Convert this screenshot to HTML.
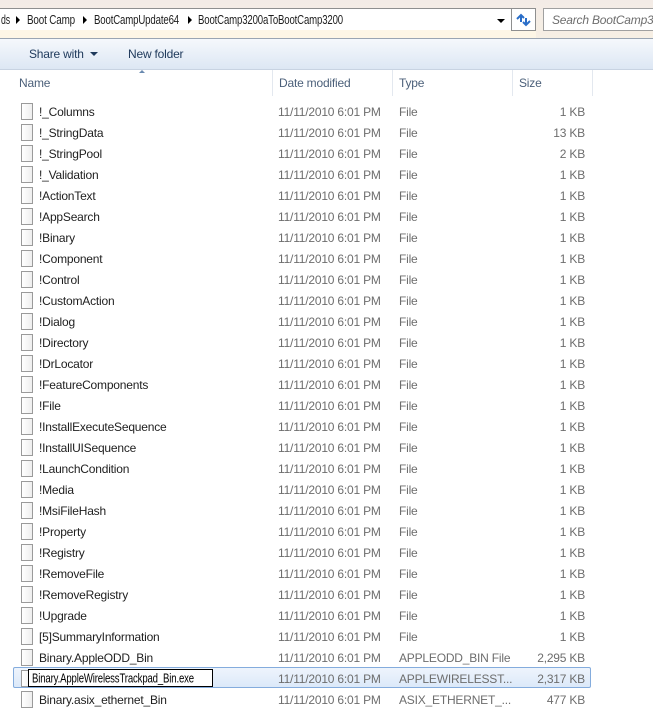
<!DOCTYPE html><html><head><style>
*{margin:0;padding:0;box-sizing:border-box}
body{width:653px;height:711px;overflow:hidden;background:#fff;font-family:"Liberation Sans",sans-serif;font-size:12px;letter-spacing:-0.2px;position:relative}
.top{position:absolute;left:0;top:0;width:653px;height:38px;background:linear-gradient(#f3ebe6,#f6efe4)}
.addr{position:absolute;left:-2px;top:8px;width:538px;height:23px;background:#fff;border:1px solid #8e8f8f;border-bottom:none}
.addrb{position:absolute;left:0;top:30px;width:536px;height:8px;background:#fdf6e6}
.ref{position:absolute;left:511px;top:8px;width:25px;height:23px;border:1px solid #8e8f8f;background:#fff}
.search{position:absolute;left:543px;top:8px;width:120px;height:23px;border:1px solid #a0a0a0;background:#fff;color:#6d6d6d;font-style:italic;padding:4px 8px;white-space:nowrap}
.tb{position:absolute;left:0;top:38px;width:653px;height:32px;background:linear-gradient(#f5f8fc,#dde7f4);border-top:1px solid #9aa5b3;border-bottom:1px solid #c8d3e2}
.tb span{position:absolute;top:8px;color:#1e395b}
.hdr{position:absolute;top:70px;left:0;width:653px;height:26px}
.hdr span{position:absolute;top:6px;color:#4c607a}
.sep{position:absolute;top:70px;width:1px;height:26px;background:#e3e8ef}
.row{position:absolute;left:0;width:653px;height:21px}
.row .ic{position:absolute;left:21px;top:2px;width:12px;height:17px;border:1px solid #9a9a9a;background:linear-gradient(90deg,#fff,#eee)}
.row .n{position:absolute;left:39px;top:4px;color:#1e1e1e;white-space:nowrap}
.row .d{position:absolute;left:278px;top:4px;color:#6d6d6d}
.row .t{position:absolute;left:399px;top:4px;color:#6d6d6d;white-space:nowrap}
.row .s{position:absolute;right:68px;top:4px;color:#6d6d6d}
.sel{background:linear-gradient(#eef4fc,#dce9f9);border:1px solid #84acdd;border-radius:2px;left:13px!important;width:578px!important}
.edit{position:absolute;left:14px;top:1px;width:185px;height:18px;border:1px solid #000;background:#fff}
</style></head><body>
<div class="top"></div>
<div class="addr"></div>
<svg style="position:absolute;left:0;top:8px" width="510" height="23" font-family="Liberation Sans, sans-serif" font-size="13" fill="#1e1e1e">
<text x="1" y="16" textLength="9" lengthAdjust="spacingAndGlyphs">ds</text>
<path d="M16 8 L20 12 L16 16Z" fill="#000"/>
<text x="27" y="16" textLength="48" lengthAdjust="spacingAndGlyphs">Boot Camp</text>
<path d="M83 8 L87 12 L83 16Z" fill="#000"/>
<text x="94" y="16" textLength="85" lengthAdjust="spacingAndGlyphs">BootCampUpdate64</text>
<path d="M188 8 L192 12 L188 16Z" fill="#000"/>
<text x="198" y="16" textLength="145" lengthAdjust="spacingAndGlyphs">BootCamp3200aToBootCamp3200</text>
<path d="M497 11 L505 11 L501 15Z" fill="#000"/>
</svg>
<div class="addrb"></div>
<div class="ref"><svg width="23" height="21"><path d="M5 10 L9 6 L12 9 M9 6 L9 13" stroke="#2a6ec8" stroke-width="2" fill="none"/><path d="M18 12 L14 16 L11 13 M14 16 L14 9" stroke="#2a6ec8" stroke-width="2" fill="none"/></svg></div>
<div class="search">Search BootCamp3200</div>
<div class="tb"><span style="left:29px">Share with</span><i style="position:absolute;left:90px;top:13px;border-left:4px solid transparent;border-right:4px solid transparent;border-top:4px solid #1e395b"></i><span style="left:128px">New folder</span></div>
<div class="hdr"><span style="left:19px">Name</span><span style="left:279px">Date modified</span><span style="left:399px">Type</span><span style="left:519px">Size</span>
<i style="position:absolute;left:139px;top:0;border-left:3px solid transparent;border-right:3px solid transparent;border-bottom:3px solid #6a8ab0"></i></div>
<div class="sep" style="left:272px"></div><div class="sep" style="left:392px"></div><div class="sep" style="left:512px"></div><div class="sep" style="left:592px"></div>
<div id="rows"></div>
<script>
var r=[["!_Columns","File","1 KB"],["!_StringData","File","13 KB"],["!_StringPool","File","2 KB"],["!_Validation","File","1 KB"],["!ActionText","File","1 KB"],["!AppSearch","File","1 KB"],["!Binary","File","1 KB"],["!Component","File","1 KB"],["!Control","File","1 KB"],["!CustomAction","File","1 KB"],["!Dialog","File","1 KB"],["!Directory","File","1 KB"],["!DrLocator","File","1 KB"],["!FeatureComponents","File","1 KB"],["!File","File","1 KB"],["!InstallExecuteSequence","File","1 KB"],["!InstallUISequence","File","1 KB"],["!LaunchCondition","File","1 KB"],["!Media","File","1 KB"],["!MsiFileHash","File","1 KB"],["!Property","File","1 KB"],["!Registry","File","1 KB"],["!RemoveFile","File","1 KB"],["!RemoveRegistry","File","1 KB"],["!Upgrade","File","1 KB"],["[5]SummaryInformation","File","1 KB"],["Binary.AppleODD_Bin","APPLEODD_BIN File","2,295 KB"],["Binary.AppleWirelessTrackpad_Bin.exe","APPLEWIRELESST...","2,317 KB"],["Binary.asix_ethernet_Bin","ASIX_ETHERNET_...","477 KB"]];
var h="";r.forEach(function(x,i){var y=101+21*i;var sel=i==27;
h+='<div class="row'+(sel?' sel':'')+'" style="top:'+(sel?y-1:y)+'px"><div class="ic"'+(sel?' style="left:7px"':'')+'></div>'+(sel?'<div class="edit"><svg width="183" height="16" style="position:absolute;left:0;top:0"><text x="3" y="12.5" font-family="Liberation Sans, sans-serif" font-size="13" fill="#000" textLength="162" lengthAdjust="spacingAndGlyphs">'+x[0]+'</text></svg></div>':'<div class="n">'+x[0]+'</div>')+'<div class="d"'+(sel?' style="left:264px"':'')+'>11/11/2010 6:01 PM</div><div class="t"'+(sel?' style="left:385px"':'')+'>'+x[1]+'</div><div class="s"'+(sel?' style="right:5px"':'')+'>'+x[2]+'</div></div>';});
document.getElementById("rows").innerHTML=h;
</script>
</body></html>
